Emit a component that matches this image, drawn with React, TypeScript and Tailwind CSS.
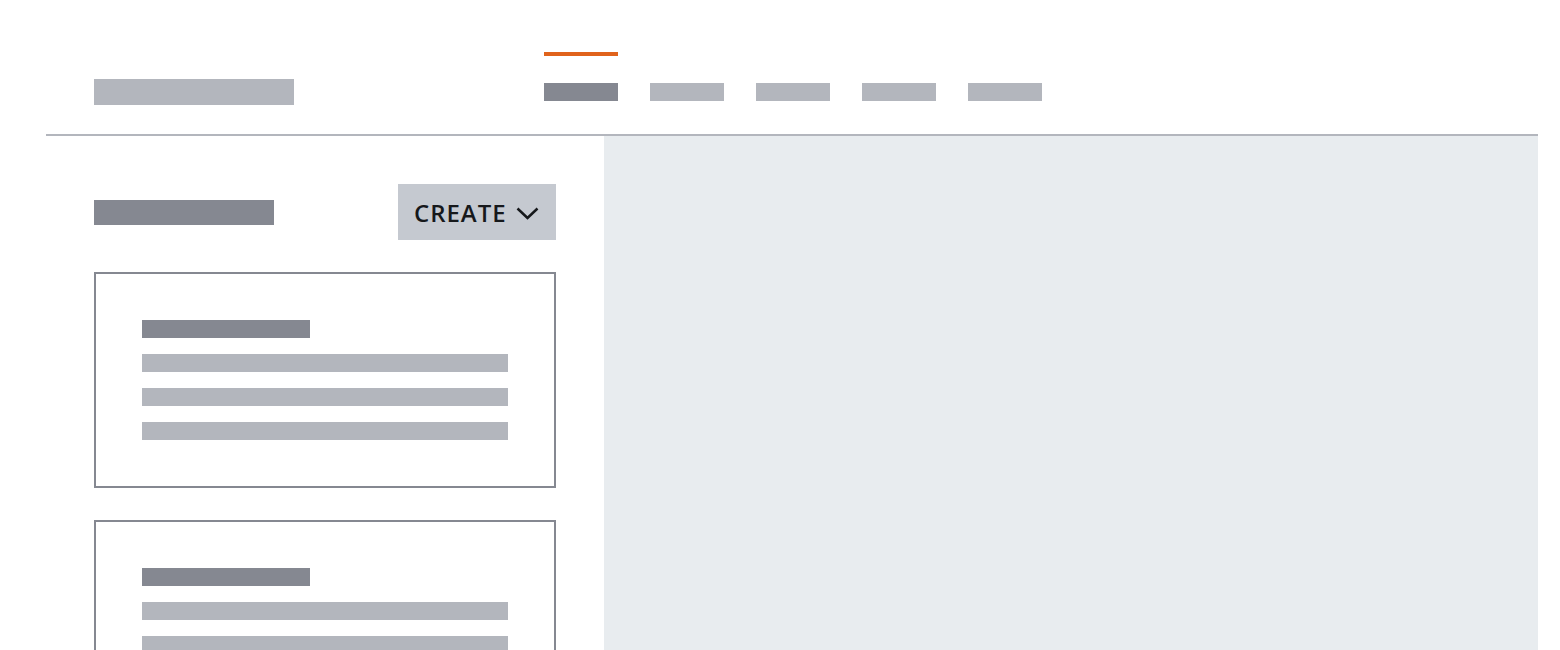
const tabs = [true, false, false, false, false];

function Card() {
  return (
    <div className="flex flex-col gap-4 border-2 border-[#858891] p-[46px]">
      <div className="h-[18px] w-[168px] bg-[#858891]" />
      <div className="h-[18px] w-full bg-[#b3b6bd]" />
      <div className="h-[18px] w-full bg-[#b3b6bd]" />
      <div className="h-[18px] w-full bg-[#b3b6bd]" />
    </div>
  );
}

export default function App() {
  return (
    <div className="h-[650px] overflow-hidden bg-white pl-[46px] pr-[22px] font-['Open_Sans',sans-serif]">
      <header className="flex h-[136px] border-b-2 border-[#b3b6bd] pl-[48px]">
        <div className="mt-[79px] h-[26px] w-[200px] bg-[#b3b6bd]" />
        <nav className="ml-[250px] flex gap-8 pt-[52px]">
          {tabs.map((active, i) => (
            <div key={i} className="flex w-[74px] flex-col">
              <div className={active ? "h-1 bg-[#e0631c]" : "h-1"} />
              <div
                className={
                  active
                    ? "mt-[27px] h-[18px] bg-[#858891]"
                    : "mt-[27px] h-[18px] bg-[#b3b6bd]"
                }
              />
            </div>
          ))}
        </nav>
      </header>

      <div className="flex h-[514px]">
        <aside className="w-[558px] flex-none px-12 pt-12">
          <div className="flex items-center justify-between">
            <div className="h-[25px] w-[180px] bg-[#858891]" />
            <button className="flex h-14 w-[158px] items-center gap-[9px] bg-[#c5c9d0] pt-[2px] pl-[16px] text-[24px] font-semibold tracking-[0.04em] text-[#16181b]">
              CREATE
              <svg width="23" height="13" viewBox="0 0 23 13" fill="none">
                <polyline
                  points="1.5,1.5 11.5,11 21.5,1.5"
                  stroke="#16181b"
                  strokeWidth="2.5"
                />
              </svg>
            </button>
          </div>
          <div className="mt-8 flex flex-col gap-8">
            <Card />
            <Card />
          </div>
        </aside>
        <main className="flex-1 bg-[#e8ecef]" />
      </div>
    </div>
  );
}
